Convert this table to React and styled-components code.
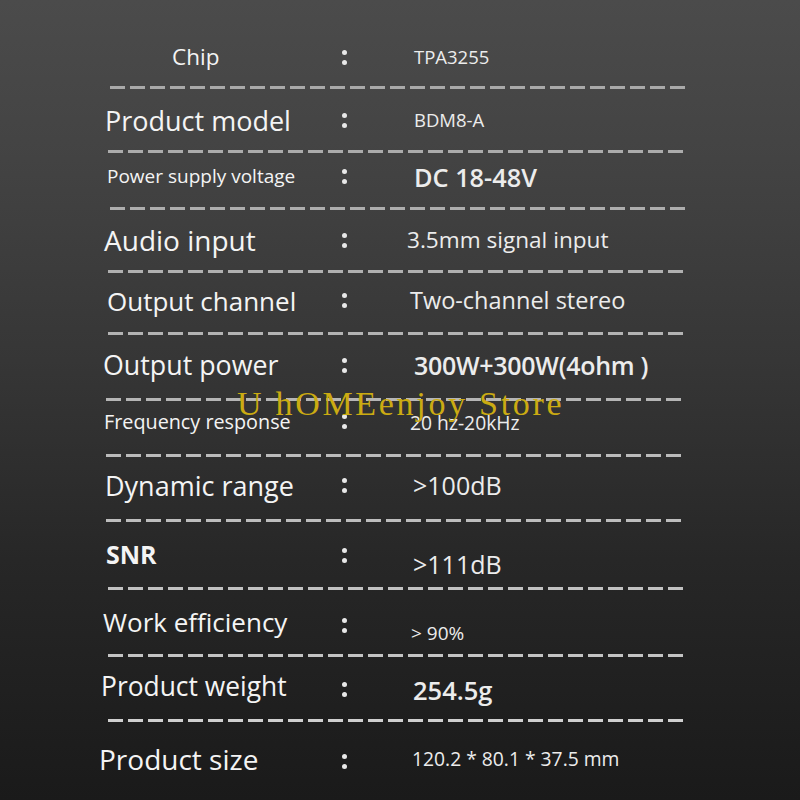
import React from "react";
import styled, { createGlobalStyle } from "styled-components";

const Global = createGlobalStyle`
  html, body { margin: 0; padding: 0; background: #1a1a1a; }
  #root { width: 800px; height: 800px; }
`;

const Sheet = styled.div`
  position: relative;
  width: 800px;
  height: 800px;
  overflow: hidden;
  display: flex;
  flex-direction: column;
  font-family: "Open Sans", "Noto Sans", sans-serif;
  color: #f1f1f1;
  background: linear-gradient(180deg, #4b4b4b 0%, #434343 20%, #363636 45%, #272727 70%, #1a1a1a 100%);
`;

const Row = styled.div`
  display: grid;
  grid-template-columns: 340px 66px 1fr;
  align-items: center;
  height: ${(p) => p.$h}px;
  padding-top: ${(p) => p.$pt || 0}px;
  padding-bottom: ${(p) => p.$pb || 0}px;
  box-sizing: border-box;
  flex: none;
`;

const Label = styled.div`
  padding-left: ${(p) => p.$x}px;
  font-size: ${(p) => p.$size}px;
  font-weight: ${(p) => p.$weight || 400};
  letter-spacing: ${(p) => p.$ls || 0}px;
  line-height: 1;
  white-space: nowrap;
  color: #f4f4f4;
`;

const Colon = styled.div`
  display: flex;
  flex-direction: column;
  gap: 5px;
  padding-left: 2px;
  padding-top: ${(p) => (p.$drop || 0) * 2}px;
  &::before, &::after {
    content: "";
    width: 5px;
    height: 5px;
    border-radius: 50%;
    background: #e8e8e8;
  }
`;

const Value = styled.div`
  padding-left: ${(p) => p.$x}px;
  padding-top: ${(p) => (p.$drop || 0) * 2}px;
  font-size: ${(p) => p.$size}px;
  font-weight: ${(p) => p.$weight || 400};
  letter-spacing: ${(p) => p.$ls || 0}px;
  line-height: 1;
  white-space: nowrap;
  color: #ececec;
`;

const Divider = styled.div`
  flex: none;
  height: 3px;
  margin-left: ${(p) => p.$x || 108}px;
  width: ${(p) => 685 - (p.$x || 108)}px;
  background: repeating-linear-gradient(
    90deg,
    ${(p) => p.$c || "#b9b9b9"} 0 15px,
    transparent 15px 20px
  );
`;

const Watermark = styled.div`
  position: absolute;
  left: 237px;
  top: 387px;
  font-family: "Liberation Serif", "DejaVu Serif", serif;
  font-size: 34px;
  letter-spacing: 2.7px;
  line-height: 1;
  color: #cbab12;
  white-space: nowrap;
  pointer-events: none;
`;

const rows = [
  { label: "Chip", lx: 172, ls: 22.5, value: "TPA3255", vx: 8, vs: 18.5, h: 86, pt: 28, pb: 0 },
  { label: "Product model", lx: 105, ls: 27, value: "BDM8-A", vx: 8, vs: 18.5, h: 61, pt: 2, pb: 0 },
  { label: "Power supply voltage", lx: 107, ls: 19, value: "DC 18-48V", vx: 8, vs: 25.3, vw: 600, vd: 1, h: 54, pt: 0, pb: 7 },
  { label: "Audio input", lx: 104, ls: 28, value: "3.5mm signal input", vx: 1, vs: 22.6, h: 60, pt: 0, pb: 0 },
  { label: "Output channel", lx: 107, ls: 26, value: "Two-channel stereo", vx: 4, vs: 23.5, h: 59, pt: 0, pb: 4 },
  { label: "Output power", lx: 103, ls: 26.8, value: "300W+300W(4ohm )", vx: 8, vs: 25, vw: 600, vlsp: -0.3, h: 63, pt: 0, pb: 2 },
  { label: "Frequency response", lx: 104, ls: 19.8, value: "20 hz-20kHz", vx: 4, vs: 19.3, vd: 1, h: 53, pt: 0, pb: 12 },
  { label: "Dynamic range", lx: 105, ls: 27, value: ">100dB", vx: 7, vs: 25, h: 62, pt: 0, pb: 5 },
  { label: "SNR", lx: 106, ls: 25, lw: 700, value: ">111dB", vx: 7, vs: 25, vd: 10, cd: 1, h: 65, pt: 0, pb: 0 },
  { label: "Work efficiency", lx: 103, ls: 26, value: "> 90%", vx: 5, vs: 19, vd: 11, cd: 3, h: 64, pt: 0, pb: 0 },
  { label: "Product weight", lx: 101, ls: 26.4, value: "254.5g", vx: 7, vs: 25.5, vw: 600, vd: 4, cd: 3, h: 62, pt: 0, pb: 3 },
  { label: "Product size", lx: 99, ls: 28, value: "120.2 * 80.1 * 37.5 mm", vx: 6, vs: 19.3, cd: 2, h: 79, pt: 0, pb: 5 },
];

const dividers = [
  { x: 110, c: "#a9a9a9" },
  { x: 108, c: "#acacac" },
  { x: 110, c: "#adadad" },
  { x: 108, c: "#b0b0b0" },
  { x: 108, c: "#b3b3b3" },
  { x: 106, c: "#b5b5b5" },
  { x: 106, c: "#bbbbbb" },
  { x: 106, c: "#bdbdbd" },
  { x: 108, c: "#c2c2c2" },
  { x: 108, c: "#c4c4c4" },
  { x: 108, c: "#cfcfcf" },
];

export default function App() {
  return (
    <>
      <Global />
      <Sheet>
        {rows.map((r, i) => (
          <React.Fragment key={r.label}>
            <Row $h={r.h} $pt={r.pt} $pb={r.pb}>
              <Label $x={r.lx} $size={r.ls} $weight={r.lw} $ls={r.lsp}>
                {r.label}
              </Label>
              <Colon $drop={r.cd} />
              <Value $x={r.vx} $size={r.vs} $weight={r.vw} $ls={r.vlsp} $drop={r.vd}>
                {r.value}
              </Value>
            </Row>
            {i < dividers.length && <Divider $x={dividers[i].x} $c={dividers[i].c} />}
          </React.Fragment>
        ))}
        <Watermark>U hOMEenjoy Store</Watermark>
      </Sheet>
    </>
  );
}
